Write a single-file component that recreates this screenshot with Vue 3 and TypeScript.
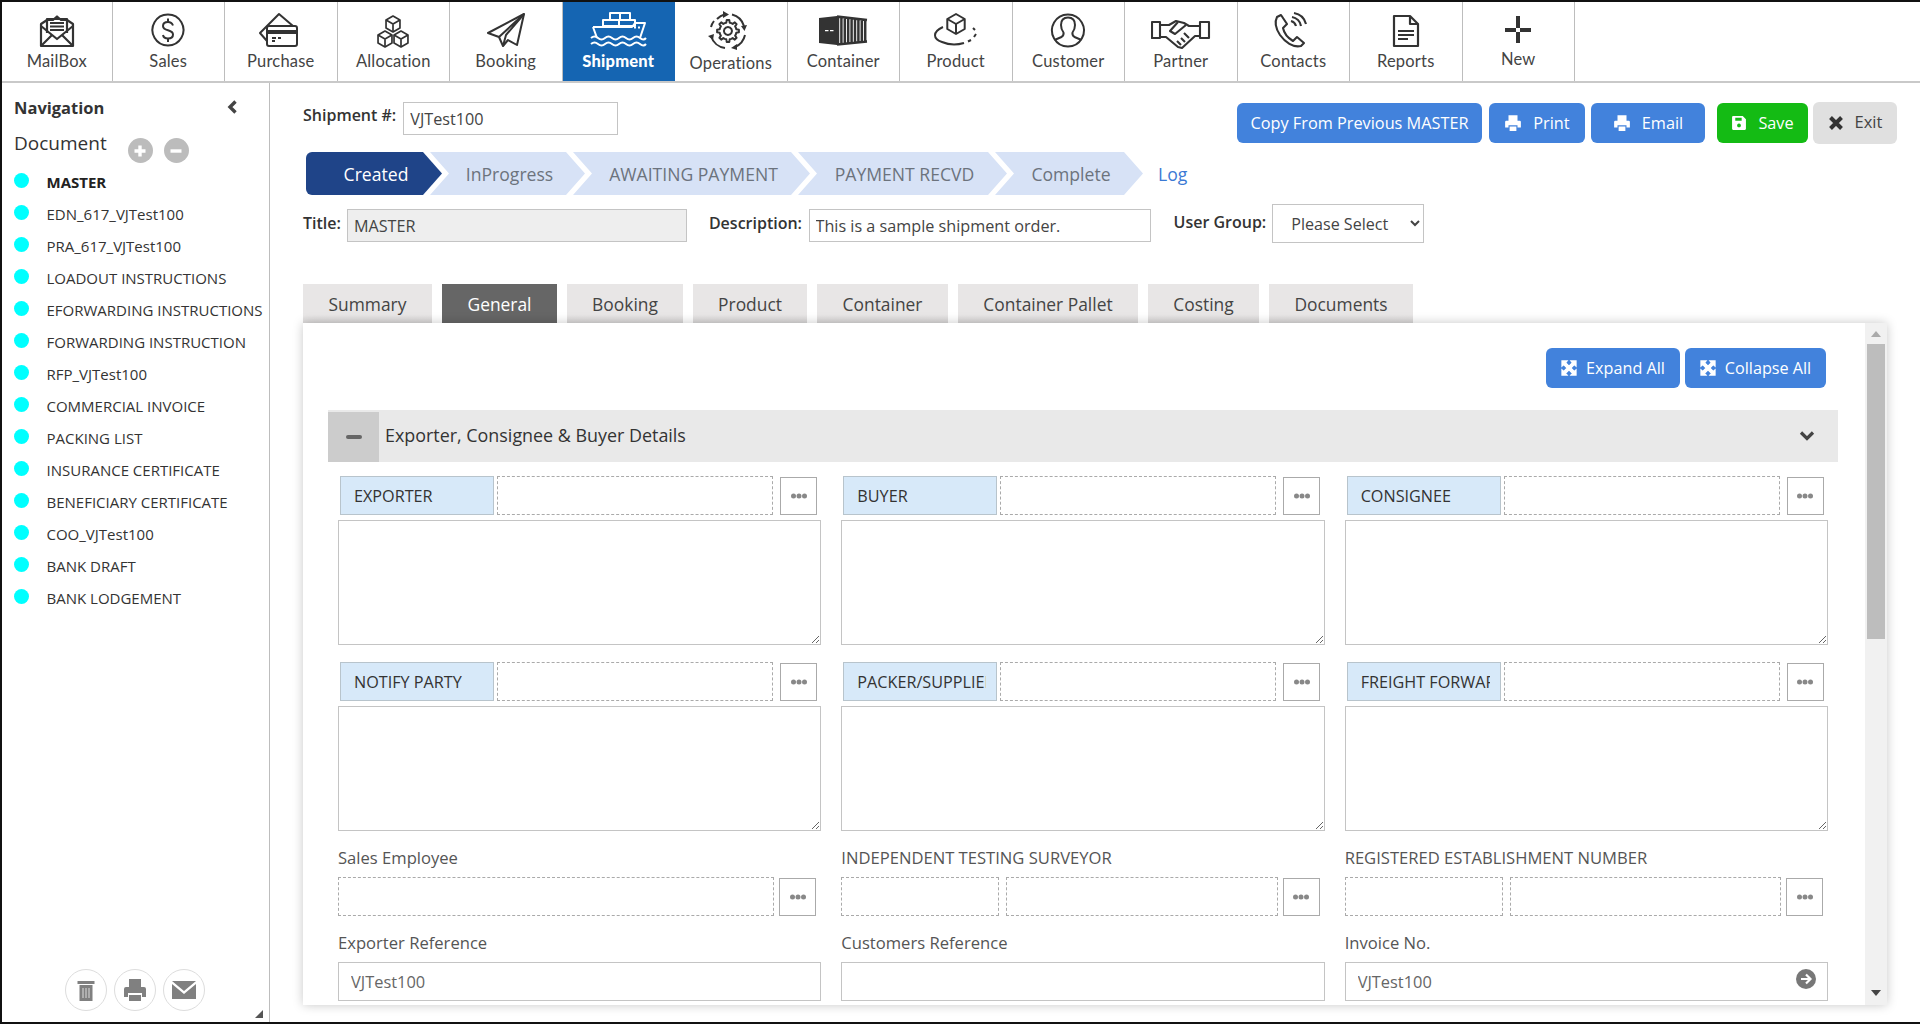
<script setup lang="ts">
interface Icon { lines: string[]; fills?: string[]; sw?: number }

const cube = (cx: number, cy: number, r = 8): string[] => {
  const w = r * 0.87, h = r / 2
  return [
    `M${cx} ${cy - r}L${cx + w} ${cy - h}V${cy + h}L${cx} ${cy + r}L${cx - w} ${cy + h}V${cy - h}Z`,
    `M${cx - w} ${cy - h}L${cx} ${cy}L${cx + w} ${cy - h}M${cx} ${cy}V${cy + r}`,
  ]
}

const gear = (cx: number, cy: number, r1: number, r2: number, n: number): string => {
  let d = ''
  const step = (Math.PI * 2) / n
  for (let i = 0; i < n; i++) {
    const a = i * step
    const pts = [
      [r1, a - step * 0.5], [r1, a - step * 0.25], [r2, a - step * 0.15], [r2, a + step * 0.15], [r1, a + step * 0.25],
    ]
    for (const [r, t] of pts) {
      d += `${d ? 'L' : 'M'}${(cx + r * Math.cos(t)).toFixed(1)} ${(cy + r * Math.sin(t)).toFixed(1)}`
    }
  }
  return d + 'Z'
}

const stripes = (): string => {
  let d = 'M24 10.500L54 14M24 38.500L54 35.500'
  for (let x = 25; x <= 53; x += 3.4) {
    const t = (x - 25) / 28
    d += `M${x.toFixed(1)} ${(10 + t * 4).toFixed(1)}V${(39 - t * 3).toFixed(1)}`
  }
  return d
}

const navItems: { label: string; active?: boolean; low?: boolean; high?: boolean; icon: Icon }[] = [
  { label: 'MailBox', icon: { lines: [
    'M14 18L20 14H26L30 10.500L34 14H40L46 18V40H14Z',
    'M20 27V13H40V27',
    'M23 17H37M23 20.500H37M23 24H37',
    'M14 20L30 33L46 20',
    'M14 40L25 29M46 40L35 29',
  ], sw: 2.2 } },
  { label: 'Sales', icon: { lines: [
    'M30 8.500A15.500 15.500 0 1 1 29.900 8.500Z',
    'M35 19.500C34 17 32.500 16 30 16C27 16 25 17.500 25 20C25 22.500 27 23.500 30 24.200C33 25 35 26 35 28.500C35 31 33 32.500 30 32.500C27.500 32.500 25.500 31.500 25 29',
    'M30 12.500V16M30 32.500V36',
  ] } },
  { label: 'Purchase', icon: { lines: [
    'M16 35L9 27L28 8L42 20',
    'M18 20H44A2 2 0 0 1 46 22V38A2 2 0 0 1 44 40H18A2 2 0 0 1 16 38V22A2 2 0 0 1 18 20Z',
    'M21 32H25M21 35H24M27 32H30',
  ], fills: ['M16 24H46V28H16Z'] } },
  { label: 'Allocation', icon: { lines: [
    ...cube(30, 18), ...cube(22, 33), ...cube(38, 33),
  ], sw: 1.7 } },
  { label: 'Booking', icon: { lines: [
    'M48 8L12 27L23 31L27 40L32 34L41 39Z',
    'M23 31L48 8M27 40L30 29L48 8',
  ] } },
  { label: 'Shipment', active: true, icon: { lines: [
    'M22 7H42V14H22ZM32 7V14',
    'M15 14H47V20H15ZM31 14V20',
    'M5 21H44L47 17H57L52 32M5 21L9 32',
    'M3 32Q6.500 29 10 32T17 32T24 32T31 32T38 32T45 32T52 32T58 32',
    'M3 38Q6.500 35 10 38T17 38T24 38T31 38T38 38T45 38T52 38T58 38',
    'M46 21.500H48M50 21.500H52',
  ], sw: 2 } },
  { label: 'Operations', low: true, icon: { lines: [
    gear(27, 25, 8.500, 11, 8),
    'M27 21A4 4 0 1 1 26.900 21Z',
    'M16 13A17 17 0 0 1 24 8.300M31 8.500A17 17 0 0 1 43 20M44 29A17 17 0 0 1 34 41M24 42A17 17 0 0 1 10 30M10 21A17 17 0 0 1 13 15',
  ], fills: ['M22 5L28 8.500L22 12Z', 'M40 20L46 19L43.500 25Z', 'M36 38L36 44L30 42Z', 'M7 30L13 28L12 34Z'] } },
  { label: 'Container', icon: { lines: [stripes()], fills: ['M6 12L24 10V39L6 37ZM12 24h3.500v1.200h-3.500zM17 24h3.500v1.200h-3.500z'], sw: 2.5 } },
  { label: 'Product', icon: { lines: [
    ...cube(30, 18, 10),
    'M17 21C6 26 7 33 16 36C23 39 31 39 38 37',
    'M42 35.500L45 34M48 31L50 28M49 24L47 22',
  ] } },
  { label: 'Customer', icon: { lines: [
    'M30 8.500A16 16 0 1 1 29.900 8.500Z',
    'M30 11.500C25 11.500 23 15 23 19C23 22 24 24.500 25.500 26.500C26 28.500 25 30 23.500 31L16.500 34',
    'M30 11.500C35 11.500 37 15 37 19C37 22 36 24.500 34.500 26.500C34 28.500 35 30 36.500 31L43.500 34',
  ] } },
  { label: 'Partner', icon: { lines: [
    'M1 16H9V32H1ZM49 16H58V32H49Z',
    'M9 19H18L25 15L33 17L38 20H49',
    'M49 30H44L31 42L27 41L15 31H9',
    'M35 19L24 28L19 25L27 16',
    'M38 32L33 27M34 36L30 32M30 39L26 35',
  ], sw: 2.1 } },
  { label: 'Contacts', icon: { lines: [
    'M14 11L18 9L24 18L20 22C21 27 25 32 30 35L34 31L41 37L38 40C30 42 22 36 17 29C13 23 11 17 14 11Z',
    'M28 15A7 7 0 0 1 33 20',
    'M29 11A11 11 0 0 1 38 20',
    'M31 7A15 15 0 0 1 43 18',
  ], sw: 2.1 } },
  { label: 'Reports', icon: { lines: ['M18 10H34L42 18V40H18ZM34 10V18H42'], fills: ['M22 24H38V26H22ZM22 28H38V30H22ZM22 32H32V34H22Z'], sw: 2.2 } },
  { label: 'New', high: true, icon: { lines: [], fills: ['M28 10H32V37H28ZM17 22H43V26H17Z'] } },
]

const documents = [
  'MASTER', 'EDN_617_VJTest100', 'PRA_617_VJTest100', 'LOADOUT INSTRUCTIONS', 'EFORWARDING INSTRUCTIONS',
  'FORWARDING INSTRUCTION', 'RFP_VJTest100', 'COMMERCIAL INVOICE', 'PACKING LIST', 'INSURANCE CERTIFICATE',
  'BENEFICIARY CERTIFICATE', 'COO_VJTest100', 'BANK DRAFT', 'BANK LODGEMENT',
]

const steps = [
  { label: 'Created', width: 136, current: true },
  { label: 'InProgress', width: 155 },
  { label: 'AWAITING PAYMENT', width: 237 },
  { label: 'PAYMENT RECVD', width: 209 },
  { label: 'Complete', width: 148 },
]

const tabs = [
  { label: 'Summary', width: 129 },
  { label: 'General', width: 115, active: true },
  { label: 'Booking', width: 116 },
  { label: 'Product', width: 114 },
  { label: 'Container', width: 131 },
  { label: 'Container Pallet', width: 180 },
  { label: 'Costing', width: 111 },
  { label: 'Documents', width: 144 },
]

const parties = ['EXPORTER', 'BUYER', 'CONSIGNEE', 'NOTIFY PARTY', 'PACKER/SUPPLIER', 'FREIGHT FORWARDER']
</script>

<template>
  <div class="frame">
    <nav class="topnav">
      <div v-for="item in navItems" :key="item.label" class="navitem" :class="{ active: item.active, low: item.low, high: item.high }">
        <svg class="navicon" width="60" height="48" viewBox="0 0 60 48" fill="none">
          <path v-for="(d, i) in item.icon.fills || []" :key="'f' + i" :d="d" class="ifill" fill-rule="evenodd" />
          <path v-for="(d, i) in item.icon.lines" :key="'l' + i" :d="d" class="iline" :stroke-width="item.icon.sw || 2" />
        </svg>
        <span class="navlabel">{{ item.label }}</span>
      </div>
    </nav>

    <div class="body">
      <aside class="sidebar">
        <div class="side-head">
          <span class="side-title">Navigation</span>
          <svg width="14" height="16" viewBox="0 0 14 16"><path d="M10.500 2.500L5 8L10.500 13.500" fill="none" stroke="#444" stroke-width="3.400" /></svg>
        </div>
        <div class="doc-head">
          <span class="doc-title">Document</span>
          <span class="round-btn"><svg width="14" height="14" viewBox="0 0 14 14"><path d="M1.500 7H12.500M7 1.500V12.500" stroke="#fff" stroke-width="3.400" /></svg></span>
          <span class="round-btn"><svg width="14" height="14" viewBox="0 0 14 14"><path d="M1.500 7H12.500" stroke="#fff" stroke-width="3.400" /></svg></span>
        </div>
        <ul class="doclist">
          <li v-for="(d, i) in documents" :key="d" class="docitem" :class="{ bold: i === 0 }">
            <span class="dot"></span><span>{{ d }}</span>
          </li>
        </ul>
        <div class="side-foot">
          <span class="foot-btn">
            <svg width="18" height="22" viewBox="0 0 18 22"><path d="M0.500 2H17.500V5H0.500ZM2.500 6H15.500V22H2.500Z" fill="#808080" /><path d="M6 9V19M9 9V19M12 9V19" stroke="#ddd" stroke-width="1" /></svg>
          </span>
          <span class="foot-btn">
            <svg width="22" height="24" viewBox="0 0 22 24"><path d="M5 1H17V9H5ZM2 9H20A2 2 0 0 1 22 11V19H18V15H4V19H0V11A2 2 0 0 1 2 9ZM5 17H17V23H5Z" fill="#808080" /></svg>
          </span>
          <span class="foot-btn">
            <svg width="24" height="20" viewBox="0 0 24 20"><path d="M0 1H24L12 11ZM0 4V19H24V4L12 14Z" fill="#808080" /></svg>
          </span>
        </div>
        <svg class="grip" width="10" height="10" viewBox="0 0 10 10"><path d="M9 1V9H1Z" fill="#555" /></svg>
      </aside>

      <main class="main">
        <div class="toprow">
          <div class="shipno">
            <label class="flabel">Shipment #:</label>
            <input class="txt ship-input" value="VJTest100" />
          </div>
          <div class="actions">
            <button class="btn blue copy">Copy From Previous MASTER</button>
            <button class="btn blue print">
              <svg width="18" height="18" viewBox="0 0 16 16"><path d="M4 1H12V6H4ZM2 6H14A1 1 0 0 1 15 7V12H12V10H4V12H1V7A1 1 0 0 1 2 6ZM5 11H11V15H5Z" fill="#fff" /></svg>Print
            </button>
            <button class="btn blue email">
              <svg width="18" height="18" viewBox="0 0 16 16"><path d="M4 1H12V6H4ZM2 6H14A1 1 0 0 1 15 7V12H12V10H4V12H1V7A1 1 0 0 1 2 6ZM5 11H11V15H5Z" fill="#fff" /></svg>Email
            </button>
            <button class="btn green">
              <svg width="16" height="16" viewBox="0 0 15 15"><path fill-rule="evenodd" d="M2 1H11L14 4V13A1 1 0 0 1 13 14H2A1 1 0 0 1 1 13V2A1 1 0 0 1 2 1ZM4 2.500V5.500H10V2.500ZM7.500 8A1.800 1.800 0 1 0 7.510 8Z" fill="#fff" /></svg>Save
            </button>
            <button class="btn grey">
              <svg width="16" height="16" viewBox="0 0 16 16"><path d="M2.500 2.500L13.500 13.500M13.500 2.500L2.500 13.500" stroke="#333" stroke-width="4" /></svg><span class="exit-text">Exit</span>
            </button>
          </div>
        </div>

        <div class="stepper">
          <div v-for="s in steps" :key="s.label" class="step" :class="{ current: s.current }" :style="{ width: s.width + 'px' }">{{ s.label }}</div>
          <a class="log">Log</a>
        </div>

        <div class="metarow">
          <label class="flabel">Title:</label>
          <input class="txt title-input" value="MASTER" readonly />
          <label class="flabel desc-label">Description:</label>
          <input class="txt desc-input" value="This is a sample shipment order." />
          <label class="flabel group-label">User Group:</label>
          <select class="group-select"><option>Please Select</option></select>
        </div>

        <div class="tabs">
          <div v-for="t in tabs" :key="t.label" class="tab" :class="{ active: t.active }" :style="{ width: t.width + 'px' }">{{ t.label }}</div>
        </div>

        <section class="panel">
          <div class="panel-content">
            <div class="expand-row">
              <button class="btn blue exp expand">
                <svg width="16" height="16" viewBox="0 0 16 16"><path d="M1 1H6L4.500 2.800L8 6.200L11.500 2.800L10 1H15V6L13.200 4.500L9.800 8L13.200 11.500L15 10V15H10L11.500 13.200L8 9.800L4.500 13.200L6 15H1V10L2.800 11.500L6.200 8L2.800 4.500L1 6Z" fill="#fff" stroke="#fff" stroke-width="1.300" /></svg>Expand All
              </button>
              <button class="btn blue exp collapse">
                <svg width="16" height="16" viewBox="0 0 16 16"><path d="M1 1H6L4.500 2.800L8 6.200L11.500 2.800L10 1H15V6L13.200 4.500L9.800 8L13.200 11.500L15 10V15H10L11.500 13.200L8 9.800L4.500 13.200L6 15H1V10L2.800 11.500L6.200 8L2.800 4.500L1 6Z" fill="#fff" stroke="#fff" stroke-width="1.300" /></svg>Collapse All
              </button>
            </div>

            <div class="sec-head">
              <span class="sec-toggle"><svg width="16" height="4" viewBox="0 0 16 4"><rect width="16" height="4" rx="2" fill="#666" /></svg></span>
              <span class="sec-title">Exporter, Consignee &amp; Buyer Details</span>
              <svg class="sec-chev" width="16" height="12" viewBox="0 0 16 12"><path d="M2 2.500L8 8.500L14 2.500" fill="none" stroke="#444" stroke-width="3.200" /></svg>
            </div>

            <div class="grid">
              <div v-for="p in parties" :key="p" class="party">
                <div class="party-head">
                  <span class="party-label"><span class="party-clip">{{ p }}</span></span>
                  <span class="dashed party-input"></span>
                  <button class="more">
                    <svg width="18" height="6" viewBox="0 0 18 6"><circle cx="3.500" cy="3" r="2.500" fill="#888" /><circle cx="9" cy="3" r="2.500" fill="#888" /><circle cx="14.500" cy="3" r="2.500" fill="#888" /></svg>
                  </button>
                </div>
                <textarea class="area"></textarea>
              </div>

              <div class="lookup">
                <div class="lab">Sales Employee</div>
                <div class="lookup-row">
                  <span class="dashed grow"></span>
                  <button class="more"><svg width="18" height="6" viewBox="0 0 18 6"><circle cx="3.500" cy="3" r="2.500" fill="#888" /><circle cx="9" cy="3" r="2.500" fill="#888" /><circle cx="14.500" cy="3" r="2.500" fill="#888" /></svg></button>
                </div>
              </div>
              <div class="lookup">
                <div class="lab">INDEPENDENT TESTING SURVEYOR</div>
                <div class="lookup-row">
                  <span class="dashed small"></span><span class="dashed grow"></span>
                  <button class="more"><svg width="18" height="6" viewBox="0 0 18 6"><circle cx="3.500" cy="3" r="2.500" fill="#888" /><circle cx="9" cy="3" r="2.500" fill="#888" /><circle cx="14.500" cy="3" r="2.500" fill="#888" /></svg></button>
                </div>
              </div>
              <div class="lookup">
                <div class="lab">REGISTERED ESTABLISHMENT NUMBER</div>
                <div class="lookup-row">
                  <span class="dashed small"></span><span class="dashed grow"></span>
                  <button class="more"><svg width="18" height="6" viewBox="0 0 18 6"><circle cx="3.500" cy="3" r="2.500" fill="#888" /><circle cx="9" cy="3" r="2.500" fill="#888" /><circle cx="14.500" cy="3" r="2.500" fill="#888" /></svg></button>
                </div>
              </div>

              <div class="ref">
                <div class="lab">Exporter Reference</div>
                <input class="txt ref-input" value="VJTest100" />
              </div>
              <div class="ref">
                <div class="lab">Customers Reference</div>
                <input class="txt ref-input" />
              </div>
              <div class="ref">
                <div class="lab">Invoice No.</div>
                <div class="ref-wrap">
                  <input class="txt ref-input" value="VJTest100" />
                  <svg class="go" width="20" height="20" viewBox="0 0 20 20"><circle cx="10" cy="10" r="10" fill="#777" /><path d="M5 10H14M10 5.500L14.500 10L10 14.500" fill="none" stroke="#fff" stroke-width="2.200" /></svg>
                </div>
              </div>
            </div>
          </div>
          <div class="scrollbar">
            <svg class="arrow" width="10" height="6" viewBox="0 0 10 6"><path d="M5 0L10 6H0Z" fill="#aaa" /></svg>
            <div class="thumb"></div>
            <svg class="arrow down" width="10" height="6" viewBox="0 0 10 6"><path d="M0 0H10L5 6Z" fill="#444" /></svg>
          </div>
        </section>
      </main>
    </div>
  </div>
</template>

<style>
html, body { margin: 0; background: #fff; }
</style>

<style scoped>
* { box-sizing: border-box; }
.frame {
  width: 1920px; height: 1024px; overflow: hidden;
  border-top: 2px solid #111; border-bottom: 2px solid #111; border-left: 2px solid #111;
  display: flex; flex-direction: column;
  font-family: "Open Sans", "Noto Sans", sans-serif; color: #333; background: #fff;
}
.topnav { height: 81px; flex: none; display: flex; border-bottom: 2px solid #c9c9c9; margin-left: -2px; padding-left: 2px; }
.navitem {
  width: 112.500px; flex: none; display: flex; flex-direction: column; align-items: center;
  border-right: 1px solid #bdbdbd; color: #333;
  font-family: Lato, "Open Sans", sans-serif; font-size: 16.500px;
}
.navitem:first-child { width: 110.500px; }
.navitem.active { background: #1565b2; color: #fff; font-weight: 900; border-right-color: #1565b2; }
.navicon { margin-top: 4px; flex: none; }
.navlabel { line-height: 20px; margin-top: -3px; letter-spacing: .2px; color: #444; }
.navitem.active .navlabel { color: #fff; }
.navitem.low .navlabel { margin-top: -1px; }
.navitem.high .navlabel { margin-top: -5px; }
.iline { stroke: currentColor; stroke-linejoin: round; fill: none; }
.ifill { fill: currentColor; }
.navitem.active .iline { stroke: #fff; }

.body { flex: 1; display: flex; min-height: 0; }
.sidebar {
  width: 268px; flex: none; border-right: 1px solid #bdbdbd; position: relative;
  display: flex; flex-direction: column; padding-left: 12px;
}
.side-head { display: flex; align-items: center; justify-content: space-between; padding: 11px 30px 0 0; height: 37px; }
.side-title { font-weight: 700; font-size: 16.500px; color: #333; }
.doc-head { display: flex; align-items: flex-end; height: 42px; }
.doc-title { font-size: 19px; line-height: 32px; margin-right: 21px; align-self: flex-start; margin-top: 7px; }
.round-btn {
  width: 25px; height: 25px; border-radius: 50%; background: #bcbcbc; margin-right: 11px; margin-bottom: -1px;
  display: flex; align-items: center; justify-content: center;
}
.doclist { list-style: none; margin: 4px 0 0; padding: 0; }
.docitem { height: 32px; display: flex; align-items: center; font-size: 15px; color: #333; }
.docitem.bold { font-weight: 700; color: #222; }
.dot { width: 15px; height: 15px; border-radius: 50%; background: #0ff; margin: -3px 17.500px 0 0; flex: none; }
.side-foot { margin-top: auto; margin-bottom: 11px; display: flex; gap: 7px; padding-left: 51px; }
.foot-btn {
  width: 42px; height: 42px; border-radius: 50%; border: 1px solid #ddd;
  display: flex; align-items: center; justify-content: center;
}
.grip { position: absolute; right: 5px; bottom: 3px; }

.main { flex: 1; min-width: 0; padding: 19px 33px 0 33px; display: flex; flex-direction: column; }
.toprow { display: flex; justify-content: space-between; height: 42px; margin-right: -10px; }
.shipno { display: flex; gap: 7px; }
.shipno .flabel { margin-top: 1px; }
.flabel { font-size: 16px; font-weight: 600; color: #333; line-height: 24px; white-space: nowrap; }
.txt {
  border: 1px solid #c4c4c4; background: #fff; height: 33px; padding: 0 6px; outline: none;
  font: 16.200px "Open Sans", sans-serif; color: #444;
}
.ship-input { width: 215px; }
.actions { display: flex; align-items: center; }
.btn {
  border: 0; border-radius: 6px; color: #fff; font: 16.300px "Open Sans", sans-serif; height: 40px;
  display: flex; align-items: center; justify-content: center; gap: 11px; padding: 0; cursor: pointer;
}
.btn.blue { background: #4282dc; }
.copy { width: 245px; margin-right: 7px; }
.print { width: 96px; margin-right: 6px; }
.email { width: 114px; margin-right: 12px; }
.btn.green { background: #14bb14; width: 91px; margin-right: 5px; }
.btn.grey { background: #e0e0e0; color: #444; width: 84px; height: 42px; margin-top: -1px; font-size: 16.500px; }
.exit-text { margin-top: -3px; }
.stepper { display: flex; align-items: center; height: 43px; margin-top: 8px; margin-left: 3px; }
.step {
  height: 43px; display: flex; align-items: center; justify-content: center; flex: none;
  background: #d7e2f6; color: #6c737d; font-size: 17.600px; margin-right: -12px; padding-left: 4px;
  clip-path: polygon(0 0, calc(100% - 19px) 0, 100% 50%, calc(100% - 19px) 100%, 0 100%, 19px 50%);
}
.step.current {
  background: #1f4488; color: #fff; border-radius: 6px 0 0 6px;
  clip-path: polygon(0 0, calc(100% - 19px) 0, 100% 50%, calc(100% - 19px) 100%, 0 100%);
}
.log { margin-left: 27px; color: #3b79d4; font-size: 17.600px; }
.metarow { display: flex; height: 39px; margin-top: 9px; }
.metarow .flabel { margin-top: 7px; }
.metarow .txt { margin-top: 5px; }
.title-input { width: 340px; margin-left: 6px; background: #eee; }
.desc-label { margin-left: 22px; }
.desc-input { width: 342px; margin-left: 6.500px; }
.group-label { margin-left: 23px; margin-top: 6px !important; }
.group-select {
  width: 152px; height: 39px; margin-left: 6px; border: 1px solid #c4c4c4; background: #fff; padding-left: 14px;
  font: 16.100px "Open Sans", sans-serif; color: #444; border-radius: 0;
}
.tabs { display: flex; gap: 10px; margin-top: 41px; height: 39px; flex: none; }
.tab {
  display: flex; align-items: center; justify-content: center; font-size: 17.400px; color: #444;
  background: linear-gradient(#e8e6e6 80%, #d8d6d6);
}
.tab.active { background: #666; color: #fff; }
.panel {
  height: 682px; flex: none; display: flex; background: #fff; overflow: hidden;
  box-shadow: 0 0 10px rgba(0,0,0,.22); position: relative; margin-right: 0;
}
.panel-content { flex: 1; min-width: 0; padding: 25px 27px 0 25px; }
.expand-row { display: flex; justify-content: flex-end; gap: 5px; margin-right: 12px; }
.exp { height: 40px; gap: 9px; font-size: 16.200px; }
.expand { width: 134px; }
.collapse { width: 141px; }
.sec-head {
  margin-top: 22px; height: 52px; background: #e9e9e9; display: flex; align-items: center; position: relative;
}
.sec-toggle {
  width: 51px; height: 50px; align-self: flex-end; background: #ccc; display: flex; align-items: center; justify-content: center;
}
.sec-title { margin-left: 6px; font-size: 17.900px; color: #333; margin-top: -2px; }
.sec-chev { margin-left: auto; margin-right: 23px; }
.grid {
  display: grid; grid-template-columns: repeat(3, 1fr); column-gap: 20px; margin: 14px 10px 0;
}
.party { margin-bottom: 17px; min-width: 0; }
.party-head { display: flex; height: 39px; padding-left: 2px; }
.party-label {
  width: 154px; flex: none; background: #d7e9f9; border: 1px solid #b8c4cc; padding-left: 13px;
  display: flex; align-items: center; font-size: 16.200px; color: #333;
}
.party-clip { width: 129px; overflow: hidden; white-space: nowrap; flex: none; }
.party-input { width: 276px; margin-left: 3px; flex: none; }
.dashed { border: 1px dashed #aaa; display: block; height: 39px; background: #fff; }
.more {
  width: 37px; height: 38px; margin-left: 7px; border: 1px solid #aaa; background: #fff; padding: 0; flex: none; align-self: flex-end;
  display: flex; align-items: center; justify-content: center;
}
.area { display: block; width: 100%; height: 125px; margin-top: 5px; border: 1px solid #c4c4c4; outline: none; background: #fff; }
.lab { height: 26px; line-height: 26px; font-size: 16.600px; font-weight: 500; color: #555; white-space: nowrap; }
.lookup { margin-top: -3px; min-width: 0; }
.lookup-row { display: flex; margin-top: 6px; padding-right: 5px; }
.lookup-row .more { margin-left: 5px; }
.lookup-row .grow { flex: 1; }
.lookup-row .small { width: 158px; margin-right: 7px; flex: none; }
.ref { margin-top: 14px; min-width: 0; }
.ref-input { display: block; width: 100%; height: 39px; margin-top: 6px; padding: 0 12px; color: #666; font-size: 16.400px; }
.ref-wrap { position: relative; }
.go { position: absolute; right: 12px; top: 7px; }
.scrollbar {
  width: 22px; flex: none; background: #f1f1f1; display: flex; flex-direction: column; align-items: center; position: relative;
}
.arrow { margin-top: 8px; flex: none; }
.arrow.down { position: absolute; bottom: 9px; margin: 0; }
.thumb { width: 18px; height: 295px; background: #bdbdbd; margin-top: 7px; }
</style>
